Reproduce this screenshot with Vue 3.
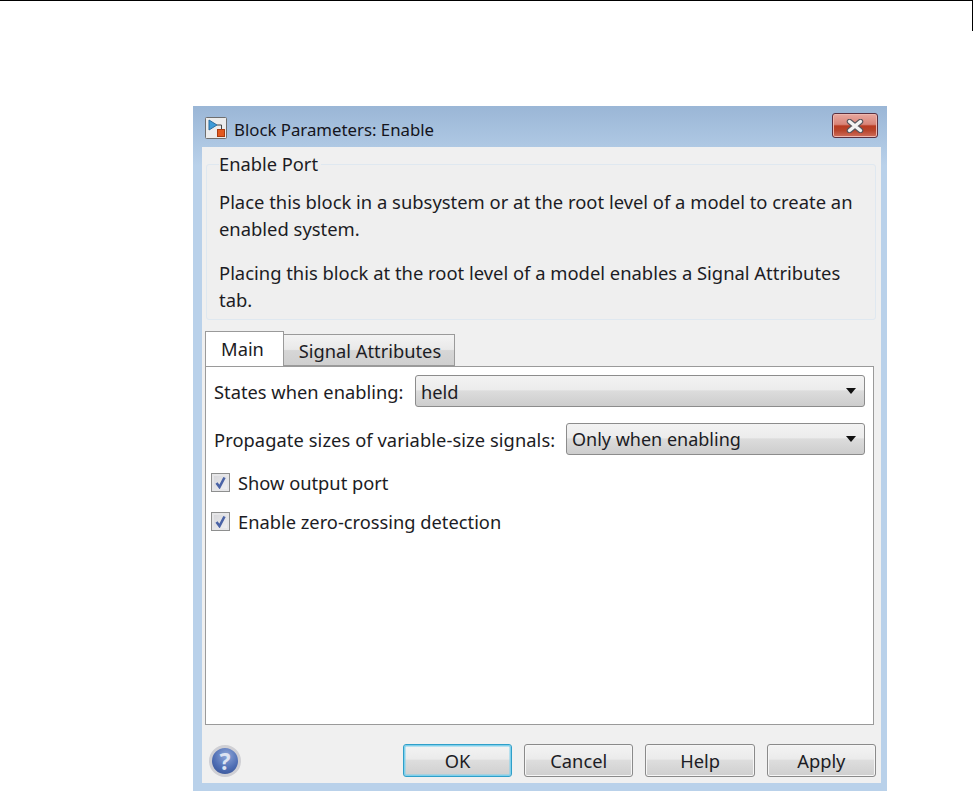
<script setup>
const actions = [
  { label: 'OK', primary: true },
  { label: 'Cancel' },
  { label: 'Help' },
  { label: 'Apply' }
]
</script>

<template>
  <div class="page">
    <div class="rule"></div>
    <section class="dialog">
      <header class="titlebar">
        <svg class="app-icon" width="22" height="22" viewBox="0 0 22 22">
          <rect x="0.5" y="0.5" width="21" height="21" rx="1" fill="#ececec" stroke="#6e6e6e" />
          <path d="M4 3 L12 8 L4 13 Z" fill="#3d9bd8" stroke="#2b6d9e" />
          <path d="M12 8 H16.5 V12" fill="none" stroke="#444" />
          <rect x="12.5" y="12.5" width="7" height="7" fill="#e2591f" stroke="#a83c10" />
        </svg>
        <span class="title">Block Parameters: Enable</span>
        <button class="close" aria-label="Close">
          <svg width="20" height="14" viewBox="0 0 20 14">
            <path d="M4.5 2.5 L15.5 11.5 M15.5 2.5 L4.5 11.5" stroke="#55555c" stroke-width="5.5" stroke-linecap="round" />
            <path d="M4.5 2.5 L15.5 11.5 M15.5 2.5 L4.5 11.5" stroke="#f2f2f2" stroke-width="3.4" stroke-linecap="round" />
          </svg>
        </button>
      </header>

      <div class="client">
        <fieldset class="group">
          <legend>Enable Port</legend>
          <p>Place this block in a subsystem or at the root level of a model to create an enabled system.</p>
          <p>Placing this block at the root level of a model enables a Signal Attributes tab.</p>
        </fieldset>

        <div class="tabs">
          <div class="tab active">Main</div>
          <div class="tab">Signal Attributes</div>
        </div>

        <div class="panel">
          <div class="field first">
            <span class="label">States when enabling:</span>
            <div class="select"><span>held</span><i class="arrow"></i></div>
          </div>
          <div class="field second">
            <span class="label">Propagate sizes of variable-size signals:</span>
            <div class="select"><span class="value">Only when enabling</span><i class="arrow"></i></div>
          </div>
          <label class="check first-check">
            <span class="box"><svg width="13" height="13" viewBox="0 0 13 13"><path d="M2.5 7 L5.5 11 L10.5 1.5" fill="none" stroke="#4a63a6" stroke-width="2.6" /></svg></span>
            Show output port
          </label>
          <label class="check">
            <span class="box"><svg width="13" height="13" viewBox="0 0 13 13"><path d="M2.5 7 L5.5 11 L10.5 1.5" fill="none" stroke="#4a63a6" stroke-width="2.6" /></svg></span>
            Enable zero-crossing detection
          </label>
        </div>

        <footer class="footer">
          <div class="help-icon">?</div>
          <div class="buttons">
            <button v-for="a in actions" :key="a.label" class="btn" :class="{ primary: a.primary }">{{ a.label }}</button>
          </div>
        </footer>
      </div>
    </section>
  </div>
</template>

<style>
html, body { margin: 0; background: #fff; }
</style>

<style scoped>
.page {
  width: 973px;
  height: 791px;
  overflow: hidden;
  background: #fff;
  font-family: "Noto Sans", "DejaVu Sans", sans-serif;
  font-size: 18.3px;
  color: #1c1c24;
}
.rule {
  height: 30px;
  border-top: 1px solid #000;
  border-right: 1px solid #000;
}
.dialog {
  margin: 75px 0 0 193px;
  width: 694px;
  height: 685px;
  display: flex;
  flex-direction: column;
  background: linear-gradient(180deg, #9ab6d6 0, #b9d1ea 60px);
  box-sizing: border-box;
}
.titlebar {
  height: 41px;
  flex: none;
  display: flex;
  align-items: center;
  padding: 5px 9px 0 12px;
  box-sizing: border-box;
}
.app-icon { flex: none; margin-top: -2px; }
.title { margin-left: 7px; flex: 1; font-size: 16.8px; color: #14141c; margin-top: 1px; }
.close {
  width: 46px;
  height: 25px;
  margin-top: -7px;
  padding: 0;
  border: 1px solid #5b3040;
  border-radius: 3px;
  background: linear-gradient(180deg, #e8a8a0 0, #d98478 45%, #b93b22 52%, #b8452c 72%, #cf6f5c 100%);
  box-shadow: inset 0 0 0 1px #eeb7ae;
  display: flex;
  align-items: center;
  justify-content: center;
}
.client {
  flex: 1;
  margin: 0 6px 8px 9px;
  background: #f0f0f0;
  display: flex;
  flex-direction: column;
  padding: 0 5px 0 3px;
  min-height: 0;
}
.group {
  margin: 6px 0 0 1px;
  padding: 13px 12px 0 12px;
  height: 167px;
  box-sizing: border-box;
  border: 1px solid #dfe8f0;
  border-radius: 3px;
  background: #efefef;
  min-width: 0;
}
.group legend {
  padding: 0 3px 0 0;
  margin-left: 0;
  line-height: 22px;
}
.group p {
  margin: 0 0 17px;
  line-height: 27px;
  font-size: 18.4px;
}
.tabs {
  margin-top: 12px;
  display: flex;
  align-items: flex-end;
  height: 34px;
  flex: none;
  position: relative;
  z-index: 1;
}
.tab {
  box-sizing: border-box;
  height: 32px;
  width: 171px;
  border: 1px solid #9a9a9a;
  border-left: 0;
  border-bottom: 1px solid #9a9a9a;
  background: linear-gradient(180deg, #f3f3f3 0, #e9e9e9 48%, #d6d6d6 52%, #cfcfcf 100%);
  text-align: center;
  line-height: 31px;
  padding-left: 2px;
}
.tab.active {
  width: 79px;
  height: 35px;
  border-left: 1px solid #9a9a9a;
  border-bottom: 0;
  background: #fff;
  line-height: 34px;
  padding: 0 4px 0 0;
}
.panel {
  box-sizing: border-box;
  height: 359px;
  flex: none;
  margin-right: 2px;
  border: 1px solid #9a9a9a;
  background: #fff;
  display: flex;
  flex-direction: column;
  padding: 8px 8px 0 8px;
}
.field {
  display: flex;
  align-items: center;
  height: 32px;
  flex: none;
}
.field.second { margin-top: 16px; }
.label { flex: none; width: 190px; white-space: nowrap; }
.field.second .label { width: 341px; letter-spacing: 0.08px; }
.value { font-size: 18px; }
.select {
  flex: 1;
  box-sizing: border-box;
  height: 32px;
  border: 1px solid #8c8c8c;
  border-radius: 3px;
  background: linear-gradient(180deg, #f3f3f3 0, #ececec 45%, #dcdcdc 50%, #cdcdcd 100%);
  display: flex;
  align-items: center;
  justify-content: space-between;
  padding: 0 8px 0 5px;
  margin-left: 11px;
}
.arrow {
  width: 0;
  height: 0;
  border-left: 5px solid transparent;
  border-right: 5px solid transparent;
  border-top: 6px solid #111;
}
.check {
  display: flex;
  align-items: center;
  height: 19px;
  margin: 20px 0 0 -3px;
  gap: 8px;
  flex: none;
}
.check.first-check { margin-top: 18px; }
.box {
  width: 19px;
  height: 19px;
  box-sizing: border-box;
  border: 1px solid #8e8f8f;
  background: linear-gradient(135deg, #d4d4d8, #f2f2f4);
  box-shadow: inset 0 0 0 2px #e6e6e8;
  display: flex;
  align-items: center;
  justify-content: center;
  flex: none;
}
.footer {
  flex: 1;
  display: flex;
  align-items: center;
  justify-content: space-between;
  padding-top: 12px;
}
.help-icon {
  width: 32px;
  height: 32px;
  border-radius: 50%;
  box-sizing: border-box;
  margin: 2px 0 0 4px;
  border: 3px solid #cfcfd4;
  background: radial-gradient(circle at 55% 30%, #8ea6d8 0, #4f6eb4 55%, #2f4a8c 100%);
  color: #dde3f2;
  font-weight: 700;
  font-size: 23px;
  line-height: 26px;
  text-align: center;
  flex: none;
}
.buttons { display: flex; gap: 12px; }
.btn {
  width: 109.3px;
  height: 33px;
  box-sizing: border-box;
  padding: 0;
  font: inherit;
  color: inherit;
  border: 1px solid #8a8a8a;
  border-radius: 3px;
  background: linear-gradient(180deg, #f3f3f3 0, #ebebeb 45%, #dddddd 50%, #cfcfcf 100%);
  box-shadow: inset 0 0 0 1px #f6f6f6;
}
.btn.primary {
  border: 1px solid #2f9fc9;
  box-shadow: inset 0 0 0 1.5px #7fd0ec;
}
</style>
